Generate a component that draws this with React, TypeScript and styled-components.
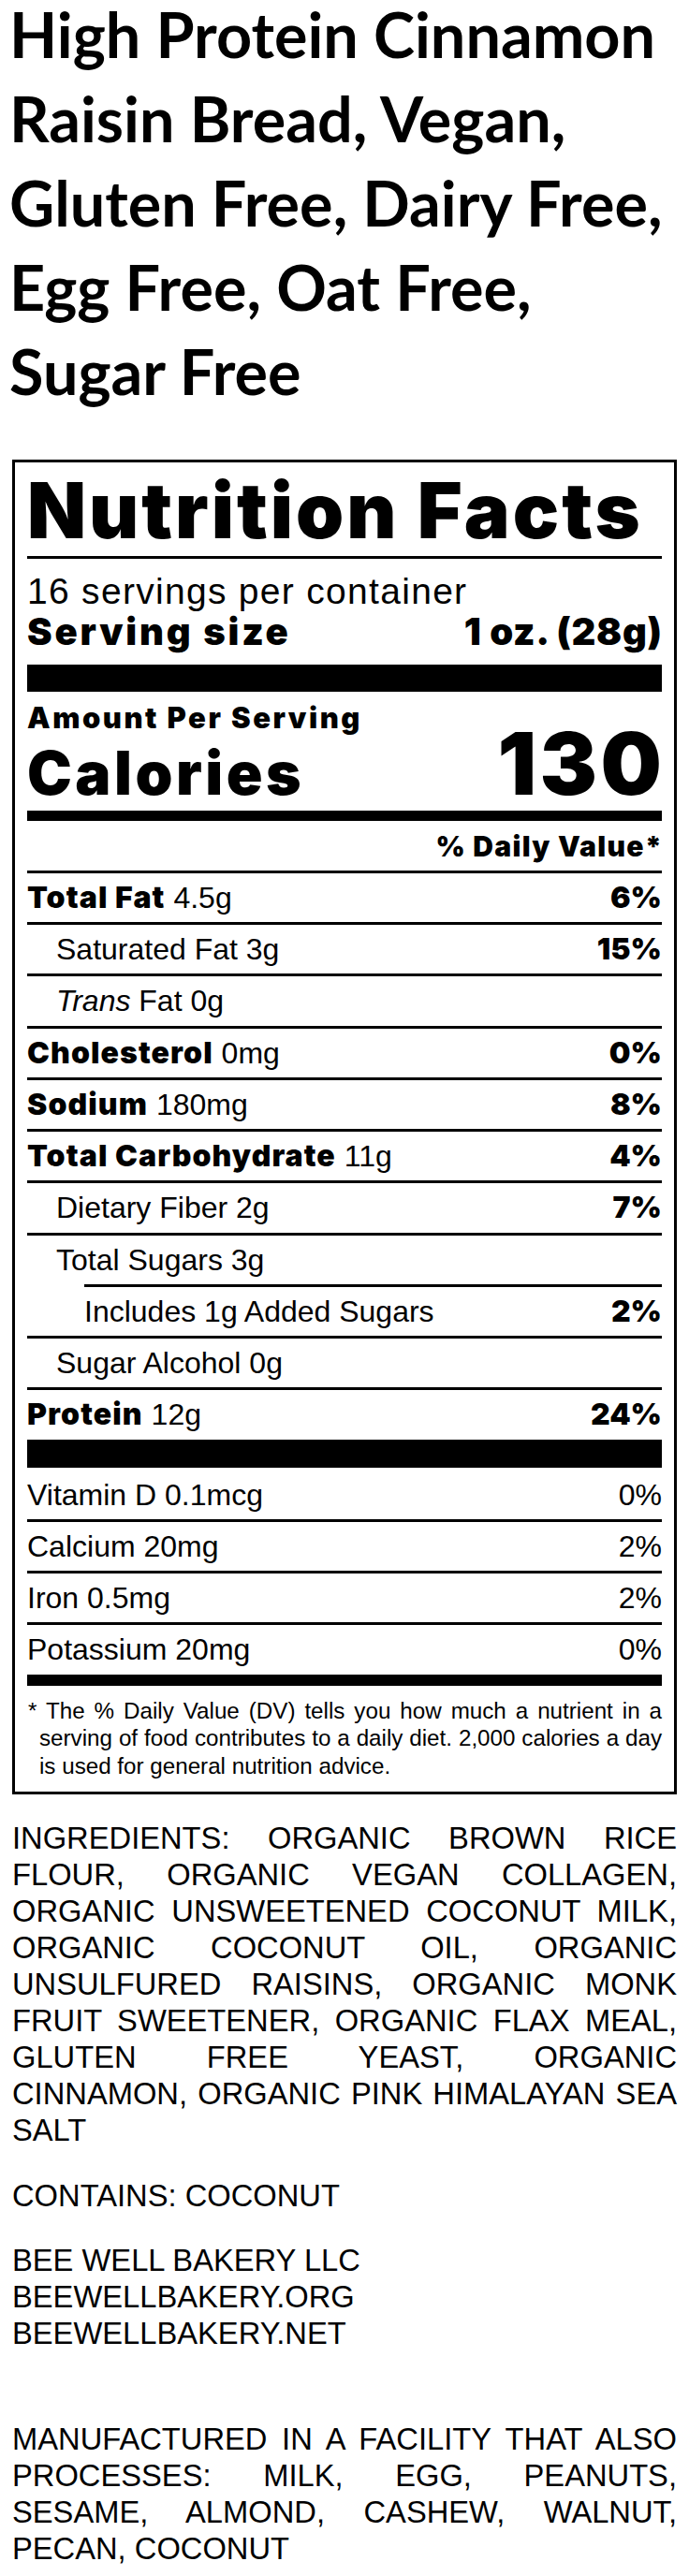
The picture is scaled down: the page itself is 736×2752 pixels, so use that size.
import React from "react";
import styled, { createGlobalStyle } from "styled-components";

const GlobalStyle = createGlobalStyle`
  html, body { margin: 0; padding: 0; background: #fff; }
  body { color: #000; font-family: "Liberation Sans", Arial, sans-serif; }
`;

const Page = styled.div`
  width: 736px;
  box-sizing: border-box;
  padding: 0 13px 10px 13px;
`;

const Title = styled.h1`
  margin: -9px -13px 0 -3px;
  font-family: Lato, "Open Sans", sans-serif;
  font-weight: 700;
  font-size: 66.5px;
  line-height: 90px;
  color: #000;
`;

const Label = styled.section`
  margin-top: 50px;
  width: 710px;
  box-sizing: border-box;
  border: 3px solid #000;
  padding: 0 13px 13px 13px;
`;

const heavy = `
  font-family: Inter, "Liberation Sans", Arial, sans-serif;
  font-weight: 900;
`;

const Black = styled.span`
  ${heavy}
`;

const BoldName = styled.span`
  ${heavy}
  letter-spacing: 1.1px;
`;

const Heading = styled.h2`
  margin: 12.2px 0 8px 0;
  ${heavy}
  font-size: 82px;
  line-height: 80px;
  letter-spacing: 3px;
  white-space: nowrap;
`;

const Rule = styled.div<{ $h: number; $top?: number }>`
  height: ${(p) => p.$h}px;
  margin-top: ${(p) => p.$top ?? 0}px;
  background: #000;
`;

const Servings = styled.div`
  margin-top: 15.3px;
  font-size: 39px;
  line-height: 40px;
  letter-spacing: 1.3px;
`;

const ServingSize = styled.div`
  margin-top: 3px;
  display: flex;
  justify-content: space-between;
  ${heavy}
  font-size: 40px;
  line-height: 40px;
`;

const ServingLabel = styled.span`
  letter-spacing: 2.8px;
`;

const ServingValue = styled.span`
  letter-spacing: 0.7px;
  margin-right: -0.7px;
`;

const Amount = styled.div`
  margin-top: 11.7px;
  ${heavy}
  font-size: 31px;
  line-height: 32px;
  letter-spacing: 2.5px;
`;

const CaloriesRow = styled.div`
  display: flex;
  justify-content: space-between;
  align-items: baseline;
  ${heavy}
`;

const CaloriesLabel = styled.span`
  font-size: 64px;
  line-height: 62px;
  letter-spacing: 3.5px;
`;

const CaloriesValue = styled.span`
  font-size: 92px;
  line-height: 66px;
  letter-spacing: 3.5px;
  margin-right: -3.5px;
`;

const DVHeader = styled.div`
  margin: 10px -1.3px 0 0;
  text-align: right;
  ${heavy}
  font-size: 30px;
  line-height: 34px;
  letter-spacing: 1.3px;
`;

const Row = styled.div<{ $pad?: number; $inset?: number; $noRule?: boolean }>`
  display: flex;
  justify-content: space-between;
  height: 51.25px;
  padding-top: 1px;
  margin-left: ${(p) => p.$inset ?? 0}px;
  padding-left: ${(p) => p.$pad ?? 0}px;
  border-top: 3px solid ${(p) => (p.$noRule ? "transparent" : "#000")};
  font-size: 32px;
  line-height: 50px;
  white-space: nowrap;
`;

const Footnote = styled.p`
  margin: 12px 0 0 0;
  padding-left: 13px;
  text-indent: -12px;
  font-size: 24.2px;
  line-height: 29.5px;
  text-align: justify;
`;

const Para = styled.p<{ $top: number }>`
  margin: ${(p) => p.$top}px 0 0 0;
  width: 710px;
  font-size: 32.7px;
  line-height: 39px;
  text-align: justify;
`;

type Nutrient = {
  name: React.ReactNode;
  bold?: boolean;
  amount?: string;
  dv?: string;
  pad?: number;
  inset?: number;
};

const nutrients: Nutrient[] = [
  { name: "Total Fat", bold: true, amount: "4.5g", dv: "6%" },
  { name: "Saturated Fat", amount: "3g", dv: "15%", pad: 31 },
  {
    name: (
      <>
        <i>Trans</i> Fat
      </>
    ),
    amount: "0g",
    pad: 31,
  },
  { name: "Cholesterol", bold: true, amount: "0mg", dv: "0%" },
  { name: "Sodium", bold: true, amount: "180mg", dv: "8%" },
  { name: "Total Carbohydrate", bold: true, amount: "11g", dv: "4%" },
  { name: "Dietary Fiber", amount: "2g", dv: "7%", pad: 31 },
  { name: "Total Sugars", amount: "3g", pad: 31 },
  { name: "Includes 1g Added Sugars", dv: "2%", inset: 61 },
  { name: "Sugar Alcohol", amount: "0g", pad: 31 },
  { name: "Protein", bold: true, amount: "12g", dv: "24%" },
];

const vitamins = [
  ["Vitamin D 0.1mcg", "0%"],
  ["Calcium 20mg", "2%"],
  ["Iron 0.5mg", "2%"],
  ["Potassium 20mg", "0%"],
];

const ingredients =
  "INGREDIENTS: ORGANIC BROWN RICE FLOUR, ORGANIC VEGAN COLLAGEN, ORGANIC " +
  "UNSWEETENED COCONUT MILK, ORGANIC COCONUT OIL, ORGANIC UNSULFURED " +
  "RAISINS, ORGANIC MONK FRUIT SWEETENER, ORGANIC FLAX MEAL, GLUTEN FREE " +
  "YEAST, ORGANIC CINNAMON,\u00a0ORGANIC PINK HIMALAYAN SEA SALT";

export default function App() {
  return (
    <Page>
      <GlobalStyle />
      <Title>
        High Protein Cinnamon Raisin Bread, Vegan, Gluten Free, Dairy Free,
        Egg Free, Oat Free, Sugar Free
      </Title>

      <Label>
        <Heading>Nutrition Facts</Heading>
        <Rule $h={3} />
        <Servings>16 servings per container</Servings>
        <ServingSize>
          <ServingLabel>Serving size</ServingLabel>
          <ServingValue>1 oz. (28g)</ServingValue>
        </ServingSize>
        <Rule $h={29} $top={14.6} />
        <Amount>Amount Per Serving</Amount>
        <CaloriesRow>
          <CaloriesLabel>Calories</CaloriesLabel>
          <CaloriesValue>130</CaloriesValue>
        </CaloriesRow>
        <Rule $h={11} $top={9} />
        <DVHeader>% Daily Value*</DVHeader>
        <Rule $h={0} $top={9} />
        {nutrients.map((n, i) => (
          <Row key={i} $pad={n.pad} $inset={n.inset}>
            <span>
              {n.bold ? <BoldName>{n.name}</BoldName> : n.name}
              {n.amount ? ` ${n.amount}` : ""}
            </span>
            {n.dv ? <Black>{n.dv}</Black> : null}
          </Row>
        ))}
        <Rule $h={30} />
        {vitamins.map(([name, dv], i) => (
          <Row key={name} $noRule={i === 0}>
            <span>{name}</span>
            <span>{dv}</span>
          </Row>
        ))}
        <Rule $h={12} />
        <Footnote>
          * The % Daily Value (DV) tells you how much a nutrient in a serving of
          food contributes to a daily diet. 2,000 calories a day is used for
          general nutrition advice.
        </Footnote>
      </Label>

      <Para $top={27}>{ingredients}</Para>
      <Para $top={31}>CONTAINS: COCONUT</Para>
      <Para $top={30}>
        BEE WELL BAKERY LLC
        <br />
        BEEWELLBAKERY.ORG
        <br />
        BEEWELLBAKERY.NET
      </Para>
      <Para $top={74}>
        MANUFACTURED IN A FACILITY THAT ALSO PROCESSES: MILK, EGG, PEANUTS,
        SESAME, ALMOND, CASHEW, WALNUT, PECAN, COCONUT
      </Para>
    </Page>
  );
}
